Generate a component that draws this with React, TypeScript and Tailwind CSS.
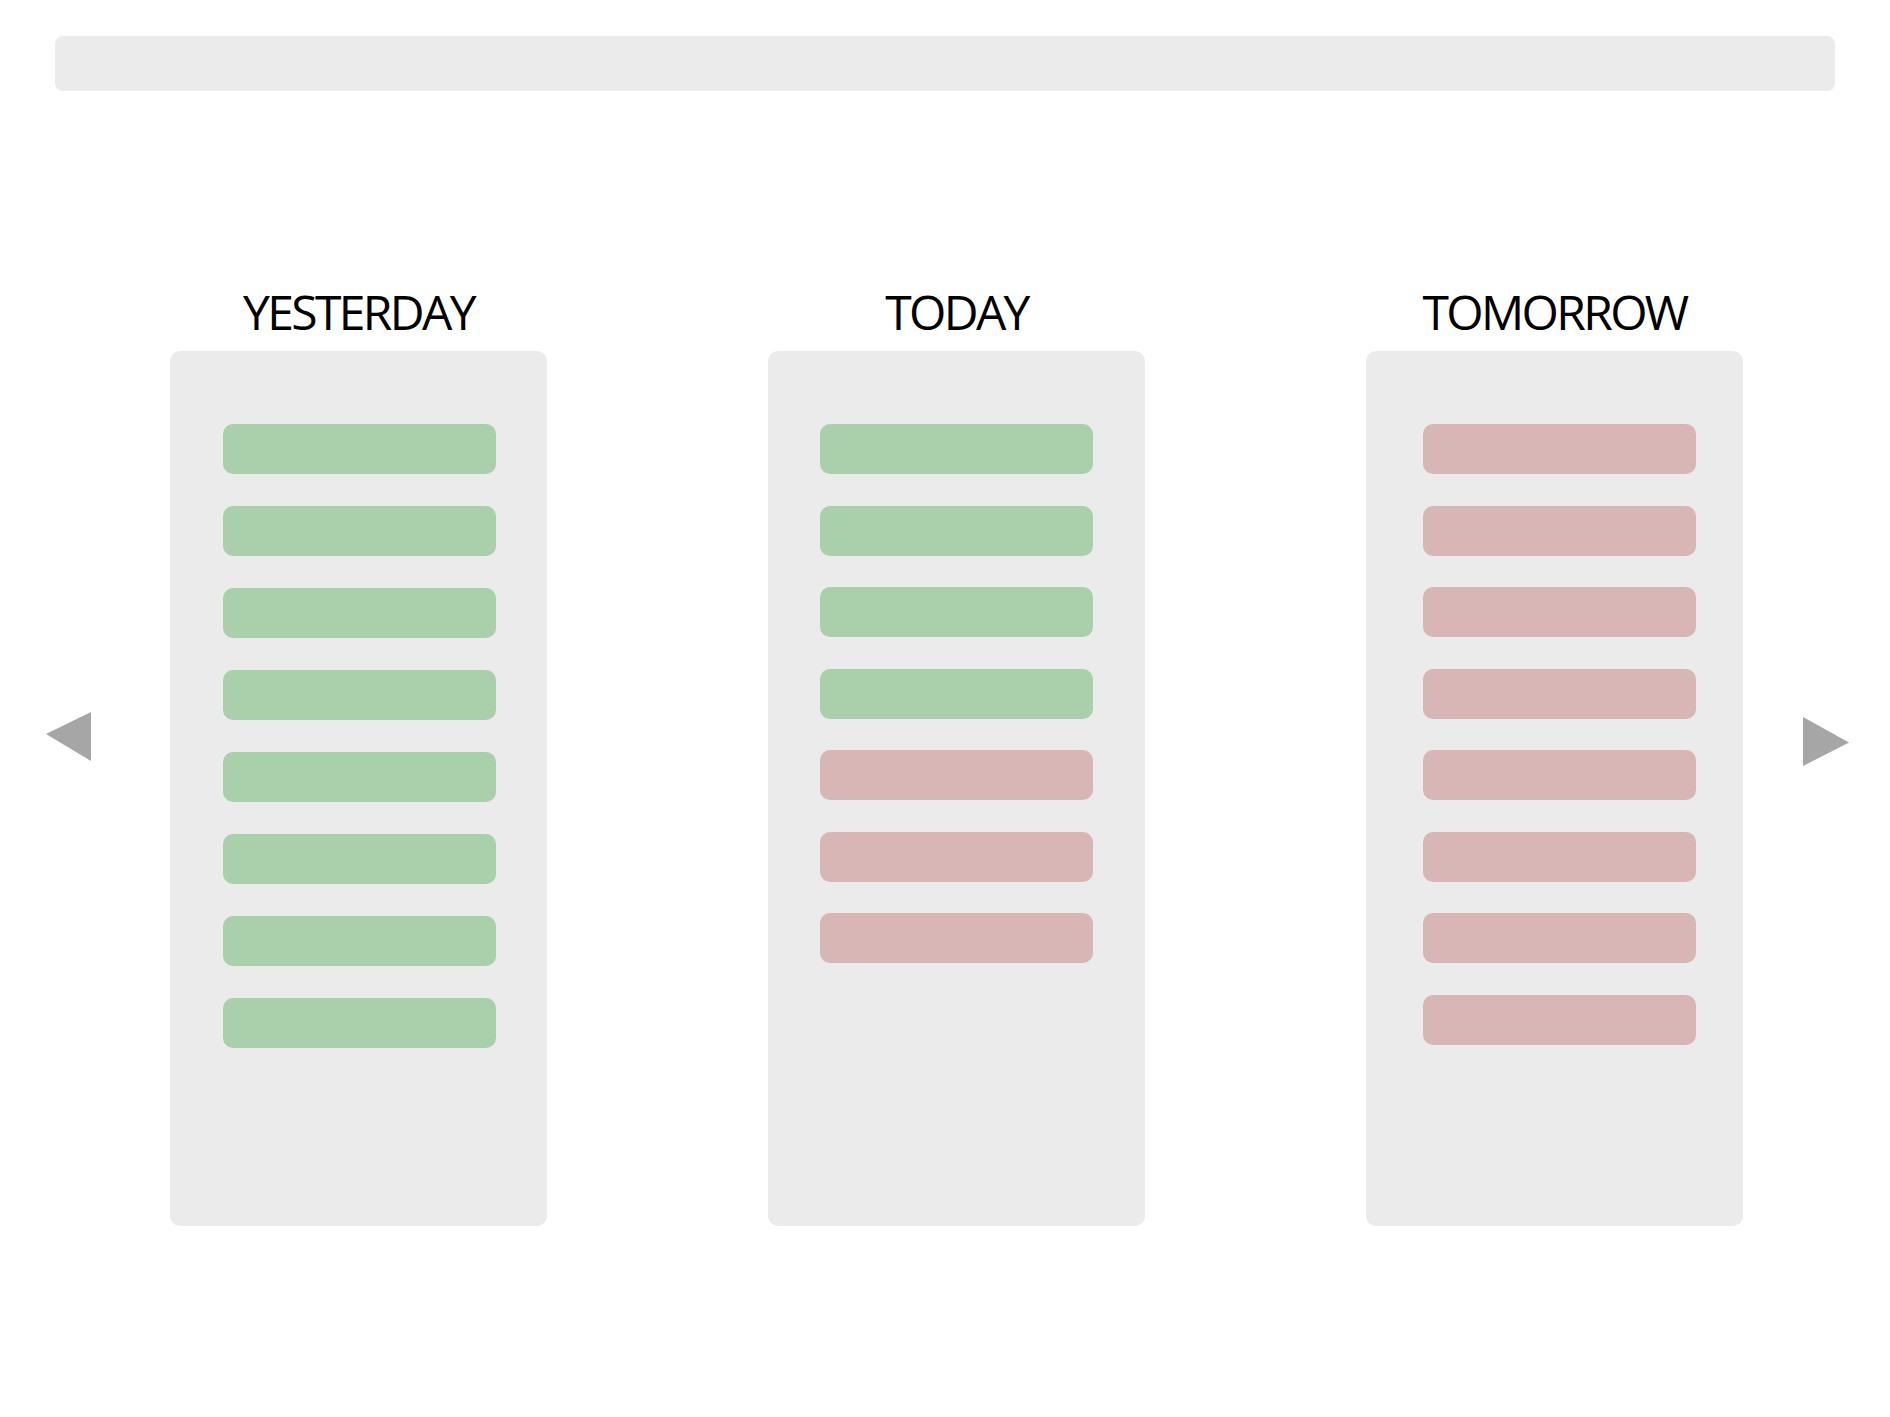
import React from "react";

type Slot = "done" | "todo";

const columns: { title: string; slots: Slot[]; box: string }[] = [
  { title: "YESTERDAY", slots: ["done", "done", "done", "done", "done", "done", "done", "done"], box: "gap-[32px] pl-[2px]" },
  { title: "TODAY", slots: ["done", "done", "done", "done", "todo", "todo", "todo"], box: "gap-[31.5px]" },
  { title: "TOMORROW", slots: ["todo", "todo", "todo", "todo", "todo", "todo", "todo", "todo"], box: "gap-[31.5px] pl-[9px]" },
];

function DayColumn({ title, slots, box }: { title: string; slots: Slot[]; box: string }) {
  return (
    <div className="flex w-[377px] flex-col items-center">
      <h2 className="h-[60px] text-[48px] leading-[60px] tracking-[-0.055em] text-black">{title}</h2>
      <div className={`mt-[9px] flex h-[875px] w-full flex-col items-center rounded-[10px] bg-[#ebebeb] pt-[73px] ${box}`}>
        {slots.map((s, i) => (
          <div
            key={i}
            className={
              s === "done"
                ? "h-[50px] w-[273px] rounded-[10px] bg-[#a9cfab]"
                : "h-[50px] w-[273px] rounded-[10px] bg-[#d7b6b5]"
            }
          />
        ))}
      </div>
    </div>
  );
}

export default function App() {
  return (
    <div className="min-h-[1417px] w-[1890px] bg-white pt-[36px] font-['Open_Sans',sans-serif]">
      <div className="mx-[55px] h-[54.5px] rounded-[8px] bg-[#ebebeb]" />

      <div className="mt-[191.5px] flex items-start">
        <svg className="ml-[46px] mt-[430px]" width="45" height="49" viewBox="0 0 45 49">
          <polygon points="0,22 45,0 45,49" fill="#a6a6a6" />
        </svg>
        <div className="ml-[79px] flex gap-[221px]">
          {columns.map((c) => (
            <DayColumn key={c.title} title={c.title} slots={c.slots} box={c.box} />
          ))}
        </div>
        <svg className="ml-[60px] mt-[435px]" width="46" height="49" viewBox="0 0 46 49">
          <polygon points="0,0 46,25.5 0,49" fill="#a6a6a6" />
        </svg>
      </div>
    </div>
  );
}
